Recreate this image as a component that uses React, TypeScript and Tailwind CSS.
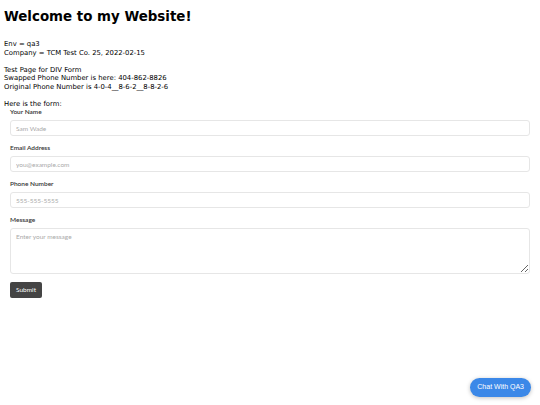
export default function App() {
  const fields = [
    { label: 'Your Name', placeholder: 'Sam Wade' },
    { label: 'Email Address', placeholder: 'you@example.com' },
    { label: 'Phone Number', placeholder: '555-555-5555' },
  ];

  return (
    <div className="relative h-[405px] w-[540px] bg-white text-black">
      <div className="px-1 pt-[7px] font-['DejaVu_Sans',sans-serif]">
        <h1 className="text-[13.4px] font-bold leading-[20px]">Welcome to my Website!</h1>
        <div className="mt-[13px] text-[6.85px] leading-[8.5px]">
          Env = qa3
          <br />
          Company = TCM Test Co. 25, 2022-02-15
          <br />
          <br />
          Test Page for DIV Form
          <br />
          Swapped Phone Number is here: 404-862-8826
          <br />
          Original Phone Number is 4-0-4__8-6-2__8-8-2-6
          <br />
          <br />
          Here is the form:
        </div>
      </div>

      <form className="flex flex-col gap-[8px] px-[10px] font-['Lato',sans-serif]">
        {fields.map((f) => (
          <div key={f.label}>
            <label className="block text-[6.5px] font-semibold leading-[8px] text-[#333]">{f.label}</label>
            <input
              placeholder={f.placeholder}
              className="mt-[4px] block h-4 w-full rounded-[3px] border border-[#e6e6e6] px-[5px] text-[6.5px] placeholder:text-[#aaa] outline-none"
            />
          </div>
        ))}
        <div>
          <label className="block text-[6.5px] font-semibold leading-[8px] text-[#333]">Message</label>
          <textarea
            placeholder="Enter your message"
            className="mt-[4px] block h-[46px] w-full rounded-[3px] border border-[#e6e6e6] px-[5px] py-[3px] text-[6.5px] placeholder:text-[#aaa] outline-none"
          />
        </div>
        <div className="flex pt-[-1px]">
          <button
            type="button"
            className="h-4 rounded-[2px] bg-[#444] px-[6px] text-[6.5px] leading-4 text-white"
          >
            Submit
          </button>
        </div>
      </form>

      <button
        type="button"
        className="absolute bottom-[8px] right-[9px] h-[19px] rounded-full bg-[#3b88e8] px-[7px] font-['Liberation_Sans',sans-serif] text-[7px] text-white shadow-[0_1px_4px_rgba(0,0,0,0.25)]"
      >
        Chat With QA3
      </button>
    </div>
  );
}
